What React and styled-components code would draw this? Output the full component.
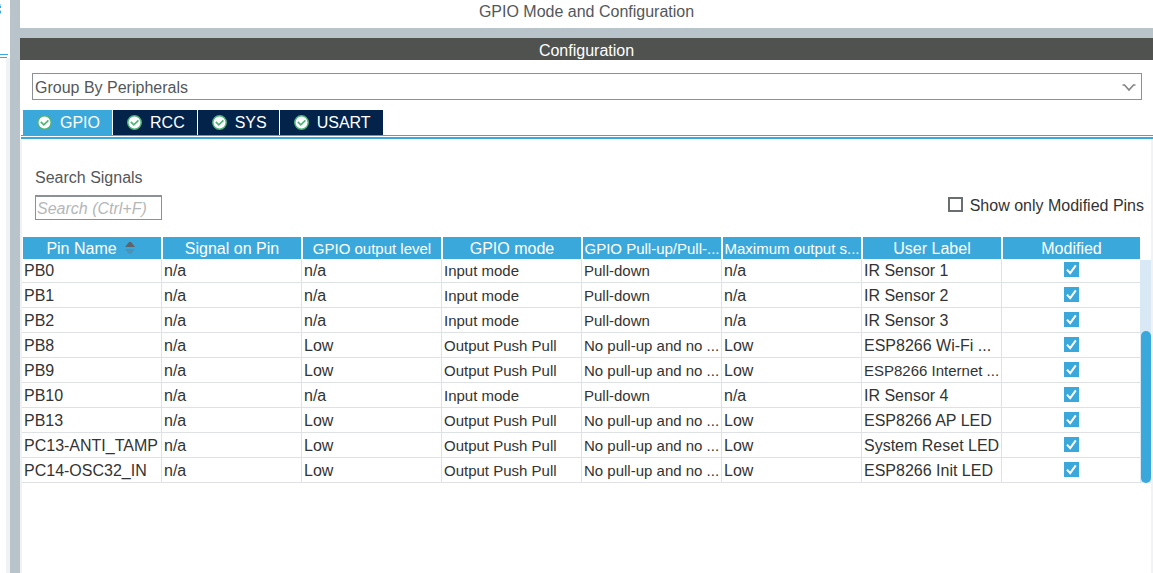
import React, { useState } from "react";
import styled, { createGlobalStyle } from "styled-components";

const blue = "#3ba8db";
const slate = "#b8c4ca";
const grid = "#dfe2e5";
const edge = "#f0f2f3";

const GlobalStyle = createGlobalStyle`
  *, *::before, *::after { box-sizing: border-box; }
  body {
    margin: 0;
    background: #fff;
    color: #333;
    font-family: "Liberation Sans", Arial, sans-serif;
    font-size: 16px;
    line-height: 20px;
  }
  button, input, select { font: inherit; color: inherit; margin: 0; }
`;

const Page = styled.div`
  display: flex;
  min-height: 100vh;
`;

const SidePanel = styled.aside`
  display: flex;
  flex-direction: column;
  flex: none;
  width: 10px;
  border-right: 10px solid ${slate};
  box-sizing: content-box;
`;

const SideTop = styled.div`
  height: 58px;
  svg { display: block; }
`;

const SideBody = styled.div`
  flex: 1;
  border-right: 4px solid ${edge};
`;

const Main = styled.main`
  display: flex;
  flex-direction: column;
  flex: 1;
  min-width: 0;
`;

const Title = styled.h1`
  margin: 0;
  height: 28px;
  padding-top: 2px;
  font-size: 16px;
  font-weight: 400;
  text-align: center;
  color: #54575a;
`;

const SectionBar = styled.h2`
  margin: 0;
  border-top: 10px solid ${slate};
  padding: 3px 0 0;
  height: 32px;
  line-height: 19px;
  font-size: 16px;
  font-weight: 400;
  text-align: center;
  color: #fff;
  background: #505250;
  background-clip: padding-box;
`;

const GroupField = styled.div`
  position: relative;
  margin: 13px 11px 10px 12px;
`;

const GroupSelect = styled.select`
  display: block;
  appearance: none;
  width: 100%;
  height: 27px;
  padding: 2px 2px 0;
  border: 1px solid #8b9197;
  border-radius: 0;
  background: #fff;
  color: #54575a;
`;

const Arrow = styled.svg`
  position: absolute;
  right: 6px;
  top: 11px;
  pointer-events: none;
`;

const Tabs = styled.div`
  display: flex;
  gap: 1px;
  padding-left: 3px;
`;

const Tab = styled.button`
  display: flex;
  align-items: center;
  gap: 8px;
  height: 25px;
  padding: 0 12px 0 14px;
  border: 0;
  color: #fff;
  background: ${(p) => (p.$active ? blue : "#03234b")};
`;

const TabRule = styled.div`
  height: 4px;
  margin-left: 1px;
  border-top: 1px solid ${blue};
  border-bottom: 2px solid ${blue};
`;

const TabPanel = styled.section`
  flex: 1;
  border-left: 2px solid ${edge};
  border-right: 2px solid ${edge};
`;

const Filters = styled.div`
  display: flex;
  justify-content: space-between;
  align-items: flex-end;
  padding: 29px 7px 17px 13px;
`;

const SearchField = styled.label`
  display: flex;
  flex-direction: column;
  gap: 7px;
  color: #54575a;
`;

const SearchInput = styled.input`
  width: 127px;
  height: 25px;
  padding: 2px 1px 0;
  border: 1px solid #8b9197;
  border-top-width: 2px;
  border-radius: 0;
  &::placeholder { color: #b4b7ba; font-style: italic; opacity: 1; }
`;

const CheckLabel = styled.label`
  display: flex;
  align-items: flex-start;
  gap: 7px;
  padding-bottom: 4px;
`;

const Box = styled.span`
  position: relative;
  display: block;
  width: 15px;
  height: 15px;
  margin: ${(p) => (p.$center ? "0 auto" : "1px 0 0")};
  svg { position: absolute; inset: 0; pointer-events: none; }
`;

const BoxInput = styled.input`
  display: block;
  appearance: none;
  width: 100%;
  height: 100%;
  border: 2px solid #6b6e70;
  background: #fff;
  &:checked { border: 0; background: ${blue}; }
`;

const TableArea = styled.div`
  display: flex;
`;

const Table = styled.table`
  flex: 1;
  min-width: 0;
  width: 100%;
  table-layout: fixed;
  border-collapse: separate;
  border-spacing: 0;
`;

const HeadCell = styled.th`
  height: 23px;
  padding: 2px 1px 0;
  border: 1px solid #fff;
  border-top: 0;
  background: ${blue};
  color: #fff;
  font-size: ${(p) => (p.$compact ? 15 : 16)}px;
  font-weight: 400;
  text-align: center;
  white-space: nowrap;
  overflow: hidden;
  text-overflow: ellipsis;
  &:last-child { width: 138px; border-right: 0; }
  svg { margin: 0 3px 0 8px; vertical-align: 0; }
`;

const Row = styled.tr`
  &:first-child td { padding-top: 1px; }
`;

const Cell = styled.td`
  padding: 3px 1px 1px 2px;
  border-right: 1px solid ${grid};
  border-bottom: 1px solid ${grid};
  font-size: ${(p) => (p.$compact ? 15 : 16)}px;
  white-space: nowrap;
  overflow: hidden;
  text-overflow: ellipsis;
  &:last-child { border-right: 0; }
`;

const CheckSlot = styled.div`
  height: 20px;
  padding-top: 1px;
`;

const ScrollTrack = styled.div`
  display: flex;
  flex-direction: column;
  justify-content: flex-end;
  width: 11px;
  margin-top: 23px;
  padding-left: 1px;
  background: #d8e8f5;
`;

const ScrollThumb = styled.div`
  height: 68%;
  border-radius: 5px;
  background: ${blue};
`;

const tabs = ["GPIO", "RCC", "SYS", "USART"];

const columns = [
  { name: "Pin Name", sorted: true },
  { name: "Signal on Pin" },
  { name: "GPIO output level", compactHead: true },
  { name: "GPIO mode", compact: true },
  { name: "GPIO Pull-up/Pull-...", compactHead: true, compact: true },
  { name: "Maximum output s...", compactHead: true },
  { name: "User Label" },
  { name: "Modified" },
];

// Labels longer than this are set in the compact size to stay inside the column.
const longLabel = 18;

const input = (pin, label) => [pin, "n/a", "n/a", "Input mode", "Pull-down", "n/a", label];
const output = (pin, label) => [
  pin, "n/a", "Low", "Output Push Pull", "No pull-up and no ...", "Low", label,
];

const pins = [
  input("PB0", "IR Sensor 1"),
  input("PB1", "IR Sensor 2"),
  input("PB2", "IR Sensor 3"),
  output("PB8", "ESP8266 Wi-Fi ..."),
  output("PB9", "ESP8266 Internet ..."),
  input("PB10", "IR Sensor 4"),
  output("PB13", "ESP8266 AP LED"),
  output("PC13-ANTI_TAMP", "System Reset LED"),
  output("PC14-OSC32_IN", "ESP8266 Init LED"),
];

function StatusIcon() {
  return (
    <svg width="15" height="15" viewBox="0 0 15 15" aria-hidden="true">
      <circle cx="7.5" cy="7.5" r="6.7" fill="#fff" stroke="#4fb477" strokeWidth="1.5" />
      <path d="M3.8 6.8l3 3L11.4 5.3" fill="none" stroke="#4fb477" strokeWidth="1.7" />
    </svg>
  );
}

function SortIcon() {
  return (
    <svg width="10" height="12" viewBox="0 0 10 12" aria-hidden="true">
      <path d="M0 5L4 0h2l4 5z" fill="#5f6468" />
      <path d="M0 7h10L6 12H4z" fill="#4d93b5" />
    </svg>
  );
}

function CheckBox({ center, ...rest }) {
  const [on, setOn] = useState(Boolean(rest.defaultChecked));
  return (
    <Box $center={center}>
      <BoxInput type="checkbox" {...rest} onChange={(e) => setOn(e.target.checked)} />
      {on && (
        <svg width="15" height="15" viewBox="0 0 15 15" aria-hidden="true">
          <path d="M3 7.6l3.2 3.6L11.8 3.4" fill="none" stroke="#fff" strokeWidth="2" />
        </svg>
      )}
    </Box>
  );
}

export default function App() {
  const [active, setActive] = useState("GPIO");
  return (
    <Page>
      <GlobalStyle />
      <SidePanel>
        <SideTop>
          <svg width="10" height="58" viewBox="0 0 10 58" aria-hidden="true">
            <path d="M0 4h1v4H0zM0 10h1v4H0z" fill="#a9dcf2" />
            <path d="M0 6h1v2H0zM0 11h1v2H0z" fill={blue} />
            <path d="M0 54h8v1H0zM0 57h7v1H0z" fill={blue} />
          </svg>
        </SideTop>
        <SideBody />
      </SidePanel>
      <Main>
        <Title>GPIO Mode and Configuration</Title>
        <SectionBar>Configuration</SectionBar>
        <GroupField>
          <GroupSelect aria-label="Grouping">
            <option>Group By Peripherals</option>
          </GroupSelect>
          <Arrow width="14" height="8" viewBox="0 0 14 8" aria-hidden="true">
            <path d="M0.5 1H2.5L7 6L11.5 1H13.5" fill="none" stroke="#858585" strokeWidth="1.7" />
          </Arrow>
        </GroupField>
        <Tabs role="tablist">
          {tabs.map((name) => (
            <Tab
              key={name}
              role="tab"
              aria-selected={name === active}
              $active={name === active}
              onClick={() => setActive(name)}
            >
              <StatusIcon />
              {name}
            </Tab>
          ))}
        </Tabs>
        <TabRule />
        <TabPanel>
          <Filters>
            <SearchField>
              Search Signals
              <SearchInput type="text" placeholder="Search (Ctrl+F)" />
            </SearchField>
            <CheckLabel>
              <CheckBox />
              Show only Modified Pins
            </CheckLabel>
          </Filters>
          <TableArea>
            <Table>
              <thead>
                <tr>
                  {columns.map((column) => (
                    <HeadCell key={column.name} scope="col" $compact={column.compactHead}>
                      {column.name}
                      {column.sorted && <SortIcon />}
                    </HeadCell>
                  ))}
                </tr>
              </thead>
              <tbody>
                {pins.map((pin) => (
                  <Row key={pin[0]}>
                    {pin.map((value, i) => (
                      <Cell key={i} $compact={columns[i].compact || value.length > longLabel}>
                        {value}
                      </Cell>
                    ))}
                    <Cell>
                      <CheckSlot>
                        <CheckBox center defaultChecked aria-label={`${pin[0]} modified`} />
                      </CheckSlot>
                    </Cell>
                  </Row>
                ))}
              </tbody>
            </Table>
            <ScrollTrack>
              <ScrollThumb />
            </ScrollTrack>
          </TableArea>
        </TabPanel>
      </Main>
    </Page>
  );
}
